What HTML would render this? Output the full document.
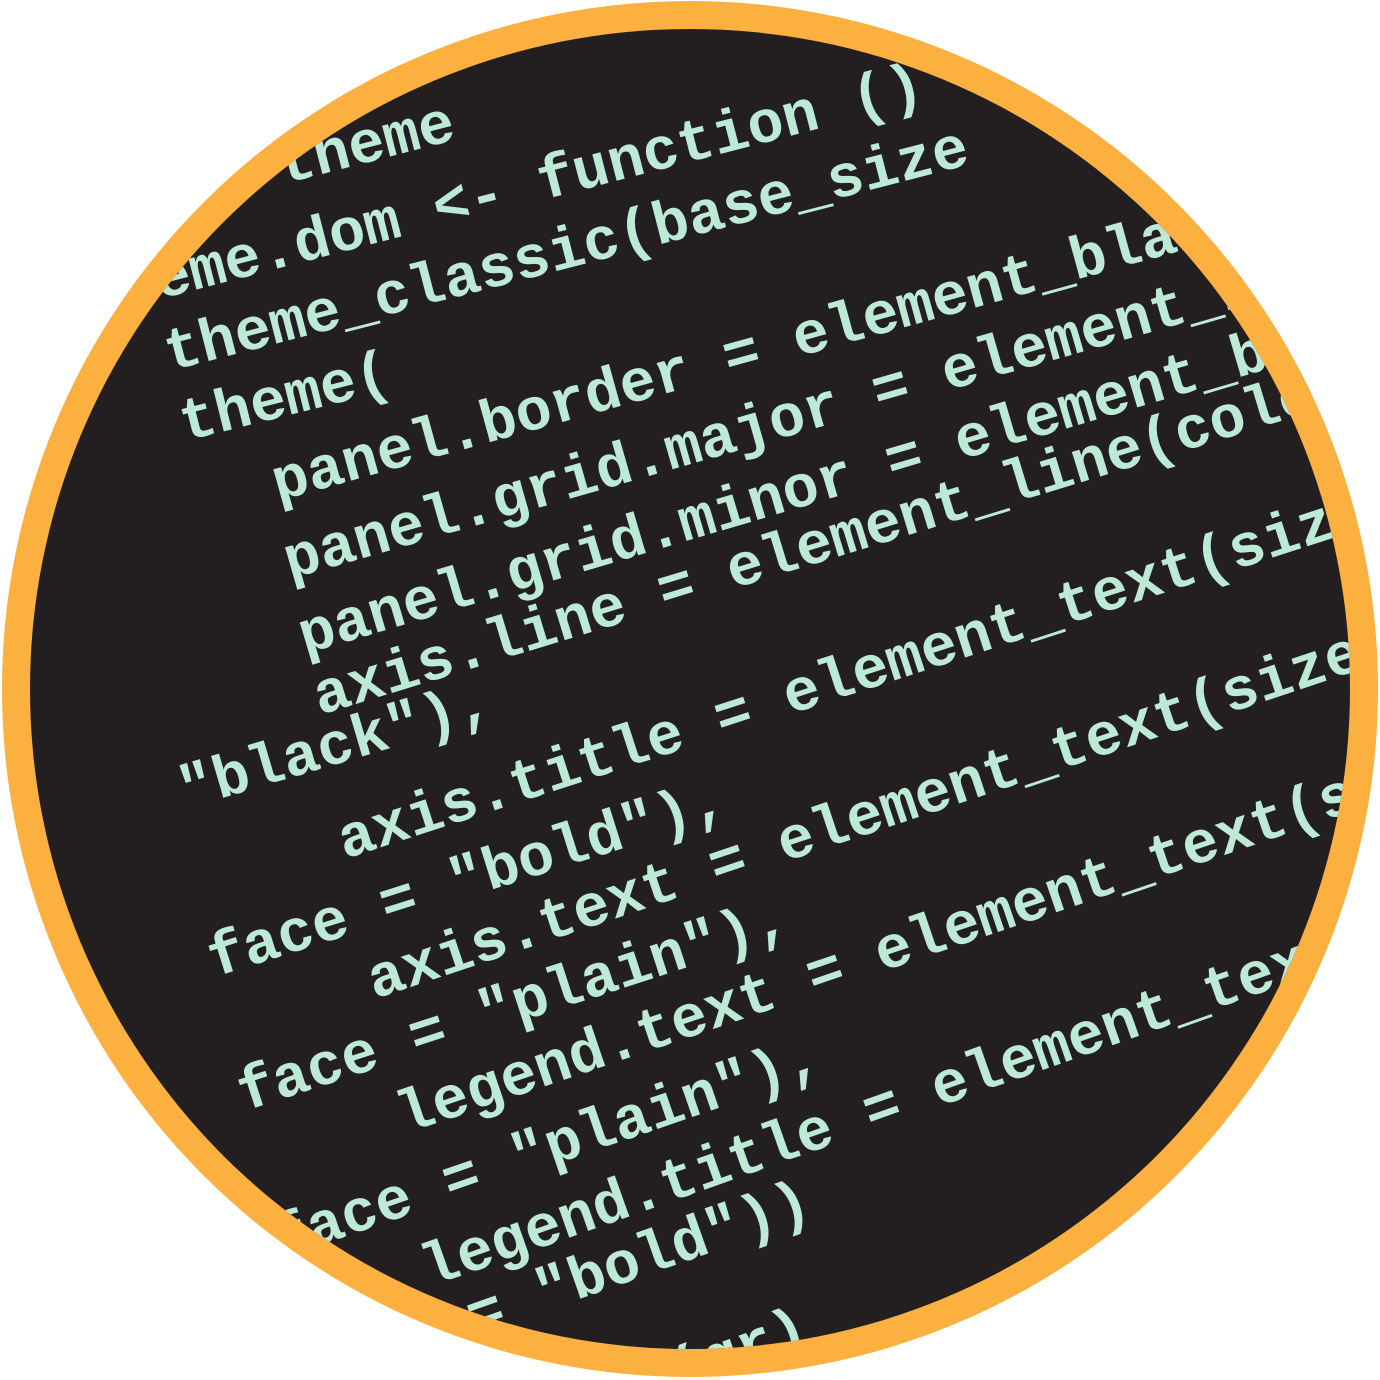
<!DOCTYPE html>
<html><head><meta charset="utf-8"><style>
html,body{margin:0;padding:0;background:#fff;overflow:hidden;width:1380px;height:1380px;}
#wrap{position:relative;width:1380px;height:1380px;overflow:hidden;}
#outer{position:absolute;left:2px;top:1px;width:1376px;height:1376px;border-radius:50%;background:#fbb040;}
#inner{position:absolute;left:30px;top:29px;width:1320px;height:1320px;border-radius:50%;background:#231f20;overflow:hidden;}
.l{position:absolute;white-space:pre;font-family:"Liberation Mono","DejaVu Sans Mono",monospace;font-weight:bold;font-size:60px;line-height:60px;color:#bde9d7;transform-origin:0 46px;}
</style></head><body><div id="wrap"><div id="outer"></div><div id="inner">
<div class="l" style="left:184px;top:128px;transform:rotate(-14.5deg)"># theme</div>
<div class="l" style="left:60px;top:243px;transform:rotate(-14.5deg)">theme.dom &lt;- function ()</div>
<div class="l" style="left:140px;top:297px;transform:rotate(-14.5deg)">theme_classic(base_size</div>
<div class="l" style="left:155px;top:367px;transform:rotate(-14deg)">theme(</div>
<div class="l" style="left:248px;top:427px;transform:rotate(-15.5deg)">panel.border = element_blank(),</div>
<div class="l" style="left:260px;top:505px;transform:rotate(-16deg)">panel.grid.major = element_blank(),</div>
<div class="l" style="left:275px;top:580px;transform:rotate(-16.5deg)">panel.grid.minor = element_blank(),</div>
<div class="l" style="left:290px;top:641px;transform:rotate(-17deg)">axis.line = element_line(colour =</div>
<div class="l" style="left:155px;top:735px;transform:rotate(-16.5deg)">"black"),</div>
<div class="l" style="left:315px;top:785px;transform:rotate(-18deg)">axis.title = element_text(size = 12,</div>
<div class="l" style="left:185px;top:903px;transform:rotate(-17.5deg)">face = "bold"),</div>
<div class="l" style="left:345px;top:925px;transform:rotate(-18.5deg)">axis.text = element_text(size = 12,</div>
<div class="l" style="left:215px;top:1037px;transform:rotate(-18deg)">face = "plain"),</div>
<div class="l" style="left:375px;top:1060px;transform:rotate(-18.8deg)">legend.text = element_text(size = 12,</div>
<div class="l" style="left:250px;top:1185px;transform:rotate(-19deg)">face = "plain"),</div>
<div class="l" style="left:400px;top:1213px;transform:rotate(-19.5deg)">legend.title = element_text(size = 12,</div>
<div class="l" style="left:445px;top:1262px;transform:rotate(-19.5deg)">= "bold"))</div>
<div class="l" style="left:545px;top:1355px;transform:rotate(-20deg)">dom(gr)</div>
</div></div></body></html>
